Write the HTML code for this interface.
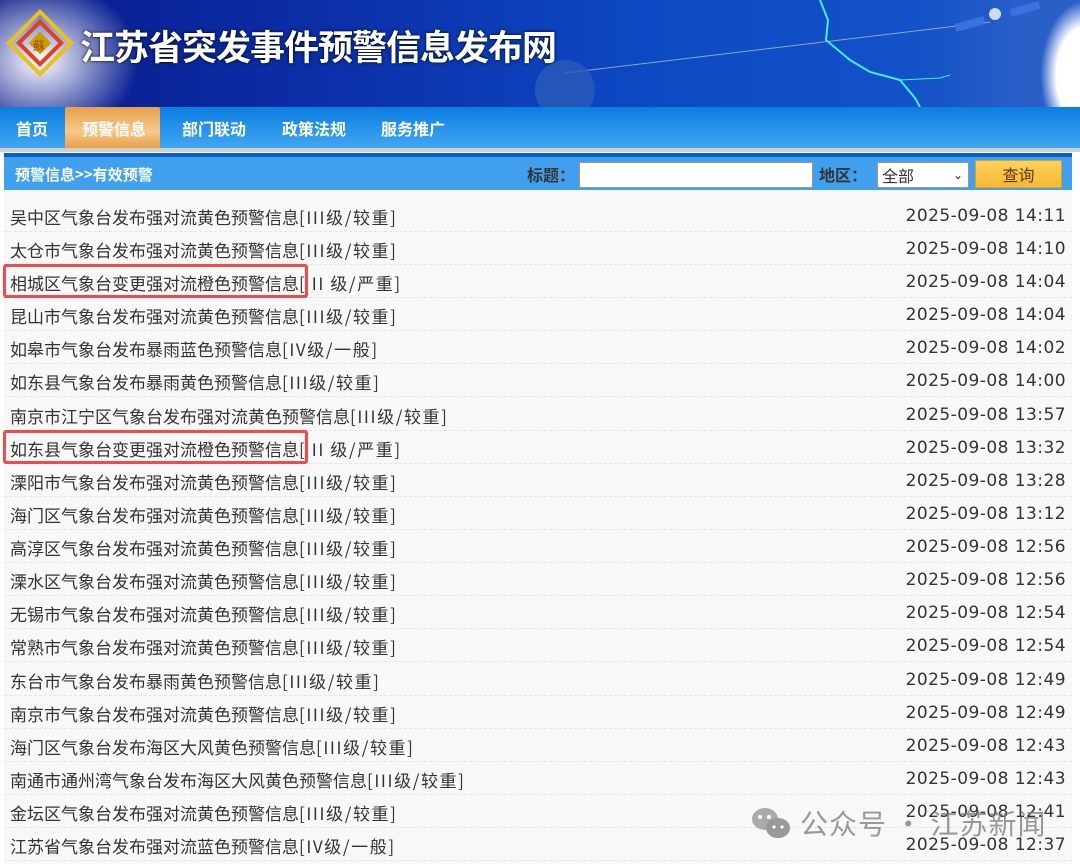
<!DOCTYPE html>
<html><head><meta charset="utf-8"><style>
*{margin:0;padding:0;box-sizing:border-box}
body{width:1080px;height:864px;overflow:hidden;background:#fff;font-family:"Liberation Sans","Noto Sans CJK SC",sans-serif}
.banner{position:absolute;left:0;top:0;width:1080px;height:107px;background:linear-gradient(90deg,#0a1a8a 0%,#0b2fa8 30%,#0d49c4 60%,#1452c8 85%,#2a5fc8 95%);overflow:hidden}
.cloud{position:absolute;border-radius:50%;background:radial-gradient(#fff,rgba(255,255,255,0) 70%)}
.title{position:absolute;left:80px;top:20px;color:#fff;font-size:35px;font-weight:bold;font-family:"Noto Sans CJK SC",sans-serif;letter-spacing:-1px;text-shadow:0 0 3px #000}
.nav{position:absolute;left:0;top:107px;width:1080px;height:41px;background:linear-gradient(#0a7ee0,#42a6f2)}
.nav span{position:absolute;top:11px;color:#fff;font-size:16px;font-weight:bold;font-family:"Noto Sans CJK SC",sans-serif;line-height:20px}
.act{position:absolute;left:65px;top:107px;width:95px;height:41px;background:linear-gradient(#e6a04a,#f7c88a 60%,#e89f45);border-radius:2px 2px 0 0}
.gline{position:absolute;left:0;top:148px;width:1080px;height:4px;background:#d0d0d0}
.sbar{position:absolute;left:4px;top:153px;width:1068px;height:37px;background:#41a0ee;border-top:4px solid #0a5fc8}
.sbar .bc{position:absolute;left:11px;top:7px;color:#fff;font-size:15px;font-weight:bold;font-family:"Noto Sans CJK SC",sans-serif}
.lbl{position:absolute;top:5px;color:#333;font-size:16px;font-weight:bold;font-family:"Noto Sans CJK SC",sans-serif}
.inp{position:absolute;left:575px;top:5px;width:234px;height:26px;background:#fff;border:1px solid #999;border-radius:2px}
.sel{position:absolute;left:873px;top:5px;width:92px;height:26px;background:#fff;border:1px solid #999;border-radius:2px;font-size:16px;color:#333;padding-left:4px;line-height:24px;font-family:"Noto Sans CJK SC",sans-serif}
.btn{position:absolute;left:971px;top:3px;width:87px;height:28px;background:linear-gradient(#ffd060,#f8b830);border:1px solid #e0a020;text-align:center;font-size:16px;color:#5a3a00;line-height:26px;font-family:"Noto Sans CJK SC",sans-serif}
.list{position:absolute;left:4px;top:190px;width:1068px;height:674px;background:#f8f8f8}
.row{position:absolute;left:0;width:1068px;height:33px;border-bottom:1px dashed #e4e4e4}
.row .t{position:absolute;left:6px;top:5px;font-size:17px;color:#333;font-family:"Noto Sans CJK SC",sans-serif;white-space:nowrap}
.row .t b{font-weight:normal;letter-spacing:1.6px}
.row .d{position:absolute;right:6px;top:7px;font-size:17px;color:#333;font-family:"DejaVu Sans",sans-serif;letter-spacing:0.45px}
.box{position:absolute;left:3px;width:305px;height:34px;border:3px solid #f04a4a;border-radius:3px}
.wm{position:absolute;left:750px;top:803px;color:rgba(120,120,120,.75);font-size:28px;font-family:"Noto Sans CJK SC",sans-serif;letter-spacing:1px}
</style></head><body>
<div class="banner">
<div class="cloud" style="left:-60px;top:-20px;width:200px;height:160px"></div>
<div class="cloud" style="left:1040px;top:0px;width:90px;height:150px;background:radial-gradient(#fff 45%,rgba(255,255,255,0) 70%)"></div>
<svg width="1080" height="107" style="position:absolute;left:0;top:0">
<line x1="565" y1="73" x2="990" y2="22" stroke="#8ab" stroke-width="1"/>
<polyline points="820,0 828,20 826,40 850,60 870,72 900,80 915,98 920,107" fill="none" stroke="#4ef" stroke-width="2"/>
<polyline points="900,80 940,78 950,75" fill="none" stroke="#4ef" stroke-width="1"/>
<rect x="955" y="20" width="30" height="8" fill="#3c6fe0" transform="rotate(-15 970 24)"/>
<rect x="1010" y="5" width="30" height="8" fill="#3c6fe0" transform="rotate(-15 1025 9)"/>
<circle cx="995" cy="14" r="6" fill="#cde"/>
<ellipse cx="565" cy="90" rx="30" ry="30" fill="#2a5ab8" opacity=".8"/>
<g transform="translate(40,43) rotate(45)">
<rect x="-22" y="-22" width="44" height="44" fill="none" stroke="#e8c020" stroke-width="4"/>
<rect x="-15" y="-15" width="30" height="30" fill="none" stroke="#e04020" stroke-width="4"/>
<rect x="-8" y="-8" width="16" height="16" fill="#c8a000"/>
</g>
<text x="33" y="50" font-size="12" fill="#b04010" font-family="Noto Sans CJK SC">蘇</text>
</svg>
<div class="title">江苏省突发事件预警信息发布网</div>
</div>
<div class="nav"></div>
<div class="act"></div>
<div class="nav" style="background:none">
<span style="left:16px">首页</span><span style="left:82px">预警信息</span><span style="left:182px">部门联动</span><span style="left:282px">政策法规</span><span style="left:381px">服务推广</span>
</div>
<div class="gline"></div>
<div class="sbar">
<div class="bc">预警信息&gt;&gt;有效预警</div>
<div class="lbl" style="left:523px">标题：</div>
<div class="inp"></div>
<div class="lbl" style="left:815px">地区：</div>
<div class="sel">全部<span style="position:absolute;right:5px;top:0;font-size:12px">⌄</span></div>
<div class="btn">查询</div>
</div>
<div class="list">
<div class="row" style="top:9px"><div class="t">吴中区气象台发布强对流黄色预警信息<b>[III级/较重]</b></div><div class="d">2025-09-08 14:11</div></div>
<div class="row" style="top:42px"><div class="t">太仓市气象台发布强对流黄色预警信息<b>[III级/较重]</b></div><div class="d">2025-09-08 14:10</div></div>
<div class="row" style="top:75px"><div class="t">相城区气象台变更强对流橙色预警信息<b>[ II 级/严重]</b></div><div class="d">2025-09-08 14:04</div></div>
<div class="row" style="top:108px"><div class="t">昆山市气象台发布强对流黄色预警信息<b>[III级/较重]</b></div><div class="d">2025-09-08 14:04</div></div>
<div class="row" style="top:141px"><div class="t">如皋市气象台发布暴雨蓝色预警信息<b>[IV级/一般]</b></div><div class="d">2025-09-08 14:02</div></div>
<div class="row" style="top:174px"><div class="t">如东县气象台发布暴雨黄色预警信息<b>[III级/较重]</b></div><div class="d">2025-09-08 14:00</div></div>
<div class="row" style="top:208px"><div class="t">南京市江宁区气象台发布强对流黄色预警信息<b>[III级/较重]</b></div><div class="d">2025-09-08 13:57</div></div>
<div class="row" style="top:241px"><div class="t">如东县气象台变更强对流橙色预警信息<b>[ II 级/严重]</b></div><div class="d">2025-09-08 13:32</div></div>
<div class="row" style="top:274px"><div class="t">溧阳市气象台发布强对流黄色预警信息<b>[III级/较重]</b></div><div class="d">2025-09-08 13:28</div></div>
<div class="row" style="top:307px"><div class="t">海门区气象台发布强对流黄色预警信息<b>[III级/较重]</b></div><div class="d">2025-09-08 13:12</div></div>
<div class="row" style="top:340px"><div class="t">高淳区气象台发布强对流黄色预警信息<b>[III级/较重]</b></div><div class="d">2025-09-08 12:56</div></div>
<div class="row" style="top:373px"><div class="t">溧水区气象台发布强对流黄色预警信息<b>[III级/较重]</b></div><div class="d">2025-09-08 12:56</div></div>
<div class="row" style="top:406px"><div class="t">无锡市气象台发布强对流黄色预警信息<b>[III级/较重]</b></div><div class="d">2025-09-08 12:54</div></div>
<div class="row" style="top:439px"><div class="t">常熟市气象台发布强对流黄色预警信息<b>[III级/较重]</b></div><div class="d">2025-09-08 12:54</div></div>
<div class="row" style="top:473px"><div class="t">东台市气象台发布暴雨黄色预警信息<b>[III级/较重]</b></div><div class="d">2025-09-08 12:49</div></div>
<div class="row" style="top:506px"><div class="t">南京市气象台发布强对流黄色预警信息<b>[III级/较重]</b></div><div class="d">2025-09-08 12:49</div></div>
<div class="row" style="top:539px"><div class="t">海门区气象台发布海区大风黄色预警信息<b>[III级/较重]</b></div><div class="d">2025-09-08 12:43</div></div>
<div class="row" style="top:572px"><div class="t">南通市通州湾气象台发布海区大风黄色预警信息<b>[III级/较重]</b></div><div class="d">2025-09-08 12:43</div></div>
<div class="row" style="top:605px"><div class="t">金坛区气象台发布强对流黄色预警信息<b>[III级/较重]</b></div><div class="d">2025-09-08 12:41</div></div>
<div class="row" style="top:638px"><div class="t">江苏省气象台发布强对流蓝色预警信息<b>[IV级/一般]</b></div><div class="d">2025-09-08 12:37</div></div>
</div>
<div class="box" style="top:264px"></div>
<div class="box" style="top:430px"></div>
<svg width="44" height="36" style="position:absolute;left:750px;top:806px"><ellipse cx="15" cy="13" rx="13" ry="11" fill="#aaa"/><ellipse cx="28" cy="22" rx="12" ry="10" fill="#999"/><circle cx="10" cy="11" r="2" fill="#fff"/><circle cx="19" cy="11" r="2" fill="#fff"/><circle cx="24" cy="21" r="1.6" fill="#fff"/><circle cx="32" cy="21" r="1.6" fill="#fff"/></svg>
<div class="wm" style="left:800px">公众号 · 江苏新闻</div>
</body></html>
